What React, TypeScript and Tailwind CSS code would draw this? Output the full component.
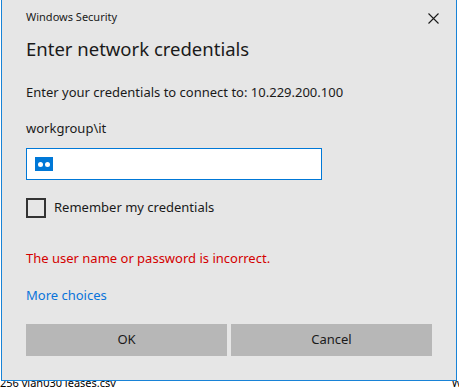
import React, { useState } from 'react';

const font = { fontFamily: '"Noto Sans", "Open Sans", sans-serif' };

const App: React.FC = () => {
  const [remember, setRemember] = useState(false);

  return (
    <div className="w-[459px] h-[387px] bg-white overflow-hidden" style={font}>
      {/* la fenêtre */}
      <div className="ml-[1px] w-[456px] h-[381px] bg-[#e6e6e6] border border-t-0 border-[#1883d7] text-[#1a1a1a] flex flex-col">
        <div className="flex items-center justify-between pl-6 pr-[17px] pt-[8px] h-[27px]">
          <span className="text-[11px]">Windows Security</span>
          <svg width="11" height="11" viewBox="0 0 11 11" className="mt-[2px]">
            <path d="M0.5 0.5 L10.5 10.5 M10.5 0.5 L0.5 10.5" stroke="#1a1a1a" strokeWidth="1.1" />
          </svg>
        </div>
        <h1 className="pl-6 mt-[8px] text-[18.5px] leading-[28px]">Enter network credentials</h1>

        <p className="pl-6 mt-[19px] text-[13px] leading-[20px]">
          Enter your credentials to connect to: 10.229.200.100
        </p>
        <p className="pl-6 mt-[16px] text-[13px] leading-[20px]">workgroup\it</p>

        <div className="ml-[24px] mt-[10px] w-[296px] h-[32px] bg-white border border-[#0078d7] flex items-center pl-[8px]">
          <span className="w-[18px] h-[14px] bg-[#0078d7] flex items-center justify-center gap-[2px]">
            <span className="w-[5px] h-[5px] rounded-full bg-white" />
            <span className="w-[5px] h-[5px] rounded-full bg-white" />
          </span>
        </div>

        <label className="ml-[24px] mt-[18px] flex items-center gap-2 text-[13px] cursor-pointer">
          <span
            onClick={() => setRemember(r => !r)}
            className="w-[20px] h-[20px] border-2 border-[#333333] bg-transparent"
          />
          <span>Remember my credentials</span>
        </label>

        <p className="pl-6 mt-[30px] text-[13px] leading-[20px] text-[#d40000]">
          The user name or password is incorrect.
        </p>
        <a className="pl-6 mt-[17px] text-[13px] leading-[20px] text-[#0a74da]">More choices</a>

        <div className="ml-[24px] mt-[19px] flex gap-[4px]">
          <button className="w-[201px] h-[32px] bg-[#b7b7b7] text-[13px]">OK</button>
          <button className="w-[201px] h-[32px] bg-[#b7b7b7] text-[13px]">Cancel</button>
        </div>
      </div>

      {/* fichiers derrière la fenêtre */}
      <div className="h-[6px] overflow-hidden flex justify-between text-[11px] text-black">
        <span className="-mt-[6px] leading-[16px]">256 vlan030 leases.csv</span>
        <span className="-mt-[6px] leading-[16px] -mr-[3px]">W</span>
      </div>
    </div>
  );
};

export default App;
